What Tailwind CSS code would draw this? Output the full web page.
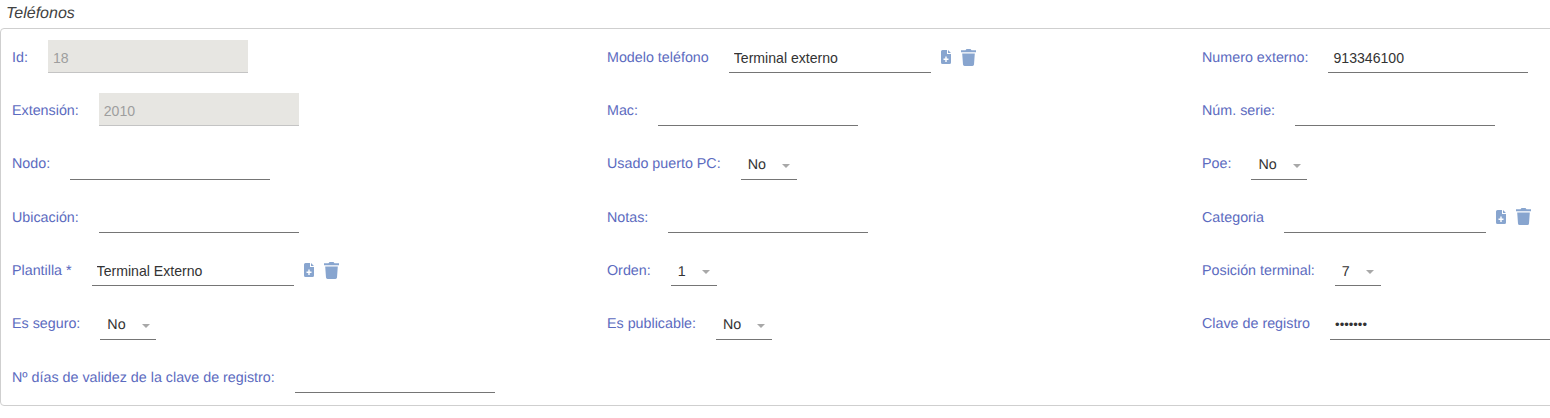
<!DOCTYPE html>
<html lang="es">
<head>
  <meta charset="UTF-8" />
  <title>Teléfonos</title>
  <script src="https://cdn.jsdelivr.net/npm/@tailwindcss/browser@4"></script>
</head>
<body class="bg-white font-['Liberation_Sans',sans-serif] text-[14.3px] [text-rendering:geometricPrecision] overflow-hidden">
  <div class="w-[1550px] h-[418px] overflow-hidden">
    <h2 class="h-[28px] pl-[6px] pt-[4px] text-[16px] leading-[20px] italic text-[#424242]">Teléfonos</h2>

    <div class="w-[1580px] h-[378px] border border-[#cfcfcf] rounded-[4px] pl-[11px] pt-[11px]">
      <div class="grid grid-cols-[595px_595px_595px] auto-rows-[33px] gap-y-[20.33px] w-[1785px] text-[#5c6bc0]">

        <!-- Fila 1 -->
        <div class="flex items-center gap-5">
          <span class="pt-[4px]">Id:</span>
          <input disabled value="18" class="w-[200px] h-[33px] px-[5px] pt-[3px] text-[14.1px] bg-[#e7e6e2] border-b border-[#c4c4c4] text-[#9e9e9e]" />
        </div>
        <div class="flex items-center gap-5">
          <span class="pt-[4px]">Modelo teléfono</span>
          <input value="Terminal externo" class="w-[202px] h-[33px] px-[5px] pt-[3px] text-[14.1px] border-b border-[#757575] text-[#333]" />
          <div class="flex items-center gap-[10px] -ml-[10px] mt-[1px] text-[#88a5cf]">
            <svg class="w-[10px] h-[14px]" viewBox="0 0 10 14"><path fill="currentColor" fill-rule="evenodd" d="M1.500 0H6v4h4v8.500A1.500 1.500 0 0 1 8.500 14h-7A1.500 1.500 0 0 1 0 12.500V1.500A1.500 1.500 0 0 1 1.500 0ZM7 0l3 3H7ZM4.300 6.500v2H2.500v1.400h1.800v2h1.400v-2h1.800V8.500H5.700v-2Z"/></svg>
            <svg class="w-[15px] h-[17px]" viewBox="0 0 15 17"><path fill="currentColor" d="M5.500 0h4l1 1.200H15v2H0v-2h4.500ZM1.200 4.500h12.600l-.8 11A1.600 1.600 0 0 1 11.400 17H3.600A1.600 1.600 0 0 1 2 15.500Z"/></svg>
          </div>
        </div>
        <div class="flex items-center gap-5">
          <span class="pt-[4px]">Numero externo:</span>
          <input value="913346100" class="w-[200px] h-[33px] px-[5px] pt-[3px] text-[14.1px] border-b border-[#757575] text-[#333]" />
        </div>

        <!-- Fila 2 -->
        <div class="flex items-center gap-5">
          <span class="pt-[4px]">Extensión:</span>
          <input disabled value="2010" class="w-[200px] h-[33px] px-[5px] pt-[3px] text-[14.1px] bg-[#e7e6e2] border-b border-[#c4c4c4] text-[#9e9e9e]" />
        </div>
        <div class="flex items-center gap-5">
          <span class="pt-[4px]">Mac:</span>
          <input class="w-[200px] h-[33px] px-[5px] border-b border-[#757575]" />
        </div>
        <div class="flex items-center gap-5">
          <span class="pt-[4px]">Núm. serie:</span>
          <input class="w-[200px] h-[33px] px-[5px] border-b border-[#757575]" />
        </div>

        <!-- Fila 3 -->
        <div class="flex items-center gap-5">
          <span class="pt-[4px]">Nodo:</span>
          <input class="w-[200px] h-[33px] px-[5px] border-b border-[#757575]" />
        </div>
        <div class="flex items-center gap-5">
          <span class="pt-[4px]">Usado puerto PC:</span>
          <div class="w-[56px] h-[33px] pl-[7px] pt-[6px] flex items-center gap-[16px] border-b border-[#757575] text-[#333]">
            <span>No</span>
            <span class="w-0 h-0 border-x-[4px] border-x-transparent border-t-[4px] border-t-[#a8a8a8]"></span>
          </div>
        </div>
        <div class="flex items-center gap-5">
          <span class="pt-[4px]">Poe:</span>
          <div class="w-[56px] h-[33px] pl-[7px] pt-[6px] flex items-center gap-[16px] border-b border-[#757575] text-[#333]">
            <span>No</span>
            <span class="w-0 h-0 border-x-[4px] border-x-transparent border-t-[4px] border-t-[#a8a8a8]"></span>
          </div>
        </div>

        <!-- Fila 4 -->
        <div class="flex items-center gap-5">
          <span class="pt-[4px]">Ubicación:</span>
          <input class="w-[200px] h-[33px] px-[5px] border-b border-[#757575]" />
        </div>
        <div class="flex items-center gap-5">
          <span class="pt-[4px]">Notas:</span>
          <input class="w-[200px] h-[33px] px-[5px] border-b border-[#757575]" />
        </div>
        <div class="flex items-center gap-5">
          <span class="pt-[4px]">Categoria</span>
          <input class="w-[202px] h-[33px] px-[5px] border-b border-[#757575]" />
          <div class="flex items-center gap-[10px] -ml-[10px] mt-[1px] text-[#88a5cf]">
            <svg class="w-[10px] h-[14px]" viewBox="0 0 10 14"><path fill="currentColor" fill-rule="evenodd" d="M1.500 0H6v4h4v8.500A1.500 1.500 0 0 1 8.500 14h-7A1.500 1.500 0 0 1 0 12.500V1.500A1.500 1.500 0 0 1 1.500 0ZM7 0l3 3H7ZM4.300 6.500v2H2.500v1.400h1.800v2h1.400v-2h1.800V8.500H5.700v-2Z"/></svg>
            <svg class="w-[15px] h-[17px]" viewBox="0 0 15 17"><path fill="currentColor" d="M5.500 0h4l1 1.200H15v2H0v-2h4.500ZM1.200 4.500h12.600l-.8 11A1.600 1.600 0 0 1 11.400 17H3.600A1.600 1.600 0 0 1 2 15.500Z"/></svg>
          </div>
        </div>

        <!-- Fila 5 -->
        <div class="flex items-center gap-5">
          <span class="pt-[4px]">Plantilla *</span>
          <input value="Terminal Externo" class="w-[202px] h-[33px] px-[5px] pt-[3px] text-[14.1px] border-b border-[#757575] text-[#333]" />
          <div class="flex items-center gap-[10px] -ml-[10px] mt-[1px] text-[#88a5cf]">
            <svg class="w-[10px] h-[14px]" viewBox="0 0 10 14"><path fill="currentColor" fill-rule="evenodd" d="M1.500 0H6v4h4v8.500A1.500 1.500 0 0 1 8.500 14h-7A1.500 1.500 0 0 1 0 12.500V1.500A1.500 1.500 0 0 1 1.500 0ZM7 0l3 3H7ZM4.300 6.500v2H2.500v1.400h1.800v2h1.400v-2h1.800V8.500H5.700v-2Z"/></svg>
            <svg class="w-[15px] h-[17px]" viewBox="0 0 15 17"><path fill="currentColor" d="M5.500 0h4l1 1.200H15v2H0v-2h4.500ZM1.200 4.500h12.600l-.8 11A1.600 1.600 0 0 1 11.400 17H3.600A1.600 1.600 0 0 1 2 15.500Z"/></svg>
          </div>
        </div>
        <div class="flex items-center gap-5">
          <span class="pt-[4px]">Orden:</span>
          <div class="w-[46px] h-[33px] pl-[7px] pt-[6px] flex items-center gap-[16px] border-b border-[#757575] text-[#333]">
            <span>1</span>
            <span class="w-0 h-0 border-x-[4px] border-x-transparent border-t-[4px] border-t-[#a8a8a8]"></span>
          </div>
        </div>
        <div class="flex items-center gap-5">
          <span class="pt-[4px]">Posición terminal:</span>
          <div class="w-[46px] h-[33px] pl-[7px] pt-[6px] flex items-center gap-[16px] border-b border-[#757575] text-[#333]">
            <span>7</span>
            <span class="w-0 h-0 border-x-[4px] border-x-transparent border-t-[4px] border-t-[#a8a8a8]"></span>
          </div>
        </div>

        <!-- Fila 6 -->
        <div class="flex items-center gap-5">
          <span class="pt-[4px]">Es seguro:</span>
          <div class="w-[56px] h-[33px] pl-[7px] pt-[6px] flex items-center gap-[16px] border-b border-[#757575] text-[#333]">
            <span>No</span>
            <span class="w-0 h-0 border-x-[4px] border-x-transparent border-t-[4px] border-t-[#a8a8a8]"></span>
          </div>
        </div>
        <div class="flex items-center gap-5">
          <span class="pt-[4px]">Es publicable:</span>
          <div class="w-[56px] h-[33px] pl-[7px] pt-[6px] flex items-center gap-[16px] border-b border-[#757575] text-[#333]">
            <span>No</span>
            <span class="w-0 h-0 border-x-[4px] border-x-transparent border-t-[4px] border-t-[#a8a8a8]"></span>
          </div>
        </div>
        <div class="flex items-center gap-5">
          <span class="pt-[4px]">Clave de registro</span>
          <input type="password" value="1234567" class="w-[240px] h-[33px] px-[5px] pt-[3px] text-[13px] border-b border-[#757575] text-[#333]" />
        </div>

        <!-- Fila 7 -->
        <div class="flex items-center gap-5">
          <span class="pt-[4px]">Nº días de validez de la clave de registro:</span>
          <input class="w-[200px] h-[33px] px-[5px] border-b border-[#757575]" />
        </div>
      </div>
    </div>
  </div>
</body>
</html>
